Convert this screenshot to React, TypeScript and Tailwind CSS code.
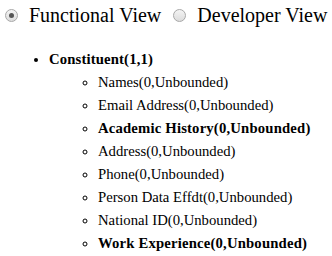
import React from 'react';

const children = [
    { label: 'Names(0,Unbounded)', bold: false },
    { label: 'Email Address(0,Unbounded)', bold: false },
    { label: 'Academic History(0,Unbounded)', bold: true },
    { label: 'Address(0,Unbounded)', bold: false },
    { label: 'Phone(0,Unbounded)', bold: false },
    { label: 'Person Data Effdt(0,Unbounded)', bold: false },
    { label: 'National ID(0,Unbounded)', bold: false },
    { label: 'Work Experience(0,Unbounded)', bold: true },
];

function Radio({ checked }: { checked: boolean }) {
    return (
        <span className="flex h-[13px] w-[13px] items-center justify-center rounded-full border border-[#a8a8a8] bg-gradient-to-b from-[#f4f4f4] to-[#dcdcdc]">
            {checked && <span className="h-[5px] w-[5px] rounded-full bg-[#555]" />}
        </span>
    );
}

export default function App() {
    return (
        <div className="h-[256px] w-[332px] overflow-hidden bg-white text-black" style={{ fontFamily: '"Liberation Serif", serif' }}>
            <div className="flex items-center pl-[5px] pt-[4px] text-[20px] leading-[22px]">
                <Radio checked />
                <span className="ml-[11px]">Functional View</span>
                <span className="ml-[12px]"><Radio checked={false} /></span>
                <span className="ml-[11px]">Developer View</span>
            </div>
            <ul className="mt-[22px] list-disc pl-[49px] text-[14.7px] leading-[23px]">
                <li className="font-bold tracking-[0.15px]">
                    Constituent(1,1)
                    <ul className="list-[circle] pl-[49px] font-normal tracking-normal">
                        {children.map((c) => (
                            <li key={c.label} className={c.bold ? 'font-bold tracking-[0.18px]' : ''}>
                                {c.label}
                            </li>
                        ))}
                    </ul>
                </li>
            </ul>
        </div>
    );
}
